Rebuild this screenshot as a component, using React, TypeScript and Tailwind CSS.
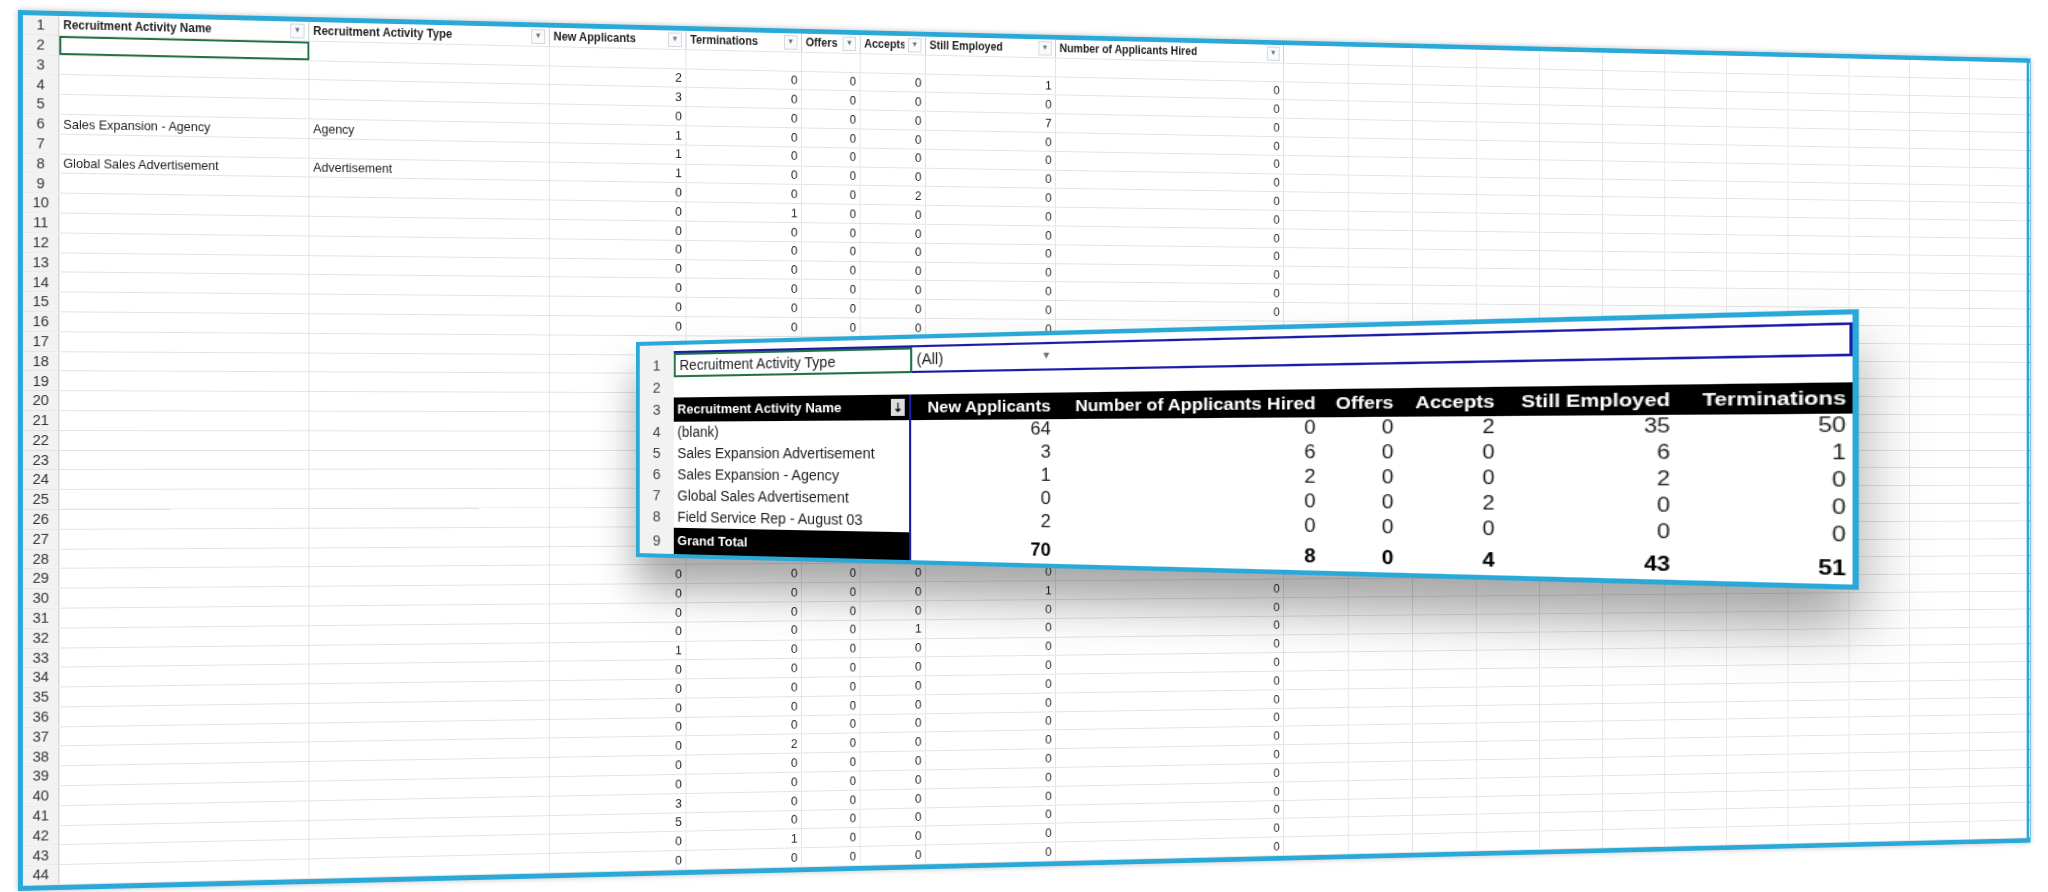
import React from 'react';

const font = { fontFamily: '"Liberation Sans", Arial, sans-serif' };

// column widths of the back sheet (flat, before perspective)
const cols = [258, 255, 148, 127, 65, 73, 147, 263];
const extra = Array.from({ length: 12 }, () => 76);

const na: Record<number, string> = { 3: '2', 4: '3', 5: '0', 6: '1', 7: '1', 8: '1', 33: '1', 41: '3', 42: '5' };
const term: Record<number, string> = { 10: '1', 38: '2', 43: '1' };
const acc: Record<number, string> = { 9: '2', 32: '1' };
const emp: Record<number, string> = { 3: '1', 5: '7', 30: '1' };
const hidden = (r: number) => r >= 17 && r <= 28;

function Filter() {
  return (
    <span className="ml-auto flex h-[15px] w-[15px] shrink-0 items-center justify-center border border-gray-300 bg-gray-50 text-[8px] text-gray-500">
      ▼
    </span>
  );
}

function Sheet() {
  const heads = [
    'Recruitment Activity Name',
    'Recruitment Activity Type',
    'New Applicants',
    'Terminations',
    'Offers',
    'Accepts',
    'Still Employed',
    'Number of Applicants Hired',
  ];
  const rows = Array.from({ length: 44 }, (_, i) => i + 1);
  return (
    <div
      className="absolute left-[18px] top-[10px] w-[2291px] border-[5px] border-[#2aa9d9] bg-white shadow-[0_0_6px_rgba(0,0,0,0.25)]"
      style={{ ...font, transform: 'perspective(3000px) rotateY(9.3deg)', transformOrigin: 'left center' }}
    >
      {rows.map((r) => (
        <div key={r} className="flex h-[19.8px] border-b border-[#e3e3e3] text-[13px] text-[#222]">
          <div className="flex w-[37px] shrink-0 items-center justify-center border-r border-[#c9c9c9] bg-[#f2f2f2] text-[15px] text-[#333]">
            {r}
          </div>
          {r === 1
            ? heads.map((h, i) => (
                <div
                  key={h}
                  style={{ width: cols[i] }}
                  className="flex shrink-0 items-center gap-1 border-r border-[#c9c9c9] px-1 text-[12px] font-bold whitespace-nowrap overflow-hidden"
                >
                  <span className="overflow-hidden">{h}</span>
                  <Filter />
                </div>
              ))
            : cols.map((w, i) => {
                let v = '';
                if (!hidden(r) && r > 2) {
                  if (i === 2) v = na[r] ?? '0';
                  if (i === 3) v = term[r] ?? '0';
                  if (i === 4) v = '0';
                  if (i === 5) v = acc[r] ?? '0';
                  if (i === 6) v = emp[r] ?? '0';
                  if (i === 7) v = '0';
                }
                if (i === 0 && r === 6) v = 'Sales Expansion - Agency';
                if (i === 1 && r === 6) v = 'Agency';
                if (i === 0 && r === 8) v = 'Global Sales Advertisement';
                if (i === 1 && r === 8) v = 'Advertisement';
                const sel = i === 0 && r === 2;
                return (
                  <div
                    key={i}
                    style={{ width: w }}
                    className={`flex shrink-0 items-center px-1 whitespace-nowrap ${i >= 2 ? 'justify-end' : ''} ${
                      sel ? 'border-2 border-[#217346]' : 'border-r border-[#e3e3e3]'
                    }`}
                  >
                    {v}
                  </div>
                );
              })}
          {extra.map((w, i) => (
            <div key={'e' + i} style={{ width: w }} className="shrink-0 border-r border-[#e3e3e3]" />
          ))}
        </div>
      ))}
    </div>
  );
}

// pivot columns (flat)
const pw = [131, 220, 60, 75, 123, 115];
const pivotRows = [
  ['(blank)', '64', '0', '0', '2', '35', '50'],
  ['Sales Expansion Advertisement', '3', '6', '0', '0', '6', '1'],
  ['Sales Expansion - Agency', '1', '2', '0', '0', '2', '0'],
  ['Global Sales Advertisement', '0', '0', '0', '2', '0', '0'],
  ['Field Service Rep - August 03', '2', '0', '0', '0', '0', '0'],
];

function Pivot() {
  const heads = ['New Applicants', 'Number of Applicants Hired', 'Offers', 'Accepts', 'Still Employed', 'Terminations'];
  return (
    <div
      className="absolute left-[636px] top-[342px] w-[1000px] border-[4px] border-[#2aa9d9] bg-white shadow-[0_30px_40px_rgba(0,0,0,0.35)]"
      style={{ ...font, transform: 'perspective(1500px) rotateY(-20.6deg)', transformOrigin: 'left center' }}
    >
      <div className="flex h-[8px]">
        <div className="w-[36px] bg-[#f2f2f2]" />
        <div className="flex-1 border-b-2 border-[#1c1ca8]" />
      </div>
      <div className="flex h-[24px] text-[14px] text-[#222]">
        <div className="flex w-[36px] items-center justify-center bg-[#f2f2f2] text-[15px] text-[#444]">1</div>
        <div className="flex w-[236px] items-center border-2 border-[#217346] px-1">Recruitment Activity Type</div>
        <div className="flex w-[130px] items-center border-b-2 border-[#1c1ca8] px-1">
          (All)
          <span className="ml-auto text-[9px] text-gray-500">▼</span>
        </div>
        <div className="flex-1 border-b-2 border-r-2 border-[#1c1ca8]" />
      </div>
      <div className="flex h-[20px]">
        <div className="flex w-[36px] items-center justify-center bg-[#f2f2f2] text-[15px] text-[#444]">2</div>
        <div className="flex-1" />
      </div>
      <div className="flex h-[24px] bg-black text-white font-bold">
        <div className="flex w-[36px] items-center justify-center bg-[#f2f2f2] text-[15px] font-normal text-[#444]">3</div>
        <div className="flex w-[236px] items-center border-r-2 border-[#1c1ca8] px-1 text-[13px]">
          Recruitment Activity Name
          <span className="ml-auto bg-[#ddd] px-[2px] text-[11px] text-black">⇣</span>
        </div>
        {heads.map((h, i) => (
          <div key={h} style={{ width: pw[i] }} className="flex items-center justify-end whitespace-nowrap px-1 text-[15px]">
            {h}
          </div>
        ))}
      </div>
      {pivotRows.map((row, ri) => (
        <div key={ri} className="flex h-[21px] text-[14px] text-[#222]">
          <div className="flex w-[36px] items-center justify-center bg-[#f2f2f2] text-[15px] text-[#444]">{ri + 4}</div>
          <div className="flex w-[236px] items-center whitespace-nowrap border-r-2 border-[#1c1ca8] px-1">{row[0]}</div>
          {row.slice(1).map((v, i) => (
            <div key={i} style={{ width: pw[i] }} className="flex items-end justify-end px-1 text-[16px]">
              {v}
            </div>
          ))}
        </div>
      ))}
      <div className="flex h-[26px] text-[15px] font-bold">
        <div className="flex w-[36px] items-center justify-center bg-[#f2f2f2] font-normal text-[#444]">9</div>
        <div className="flex w-[236px] items-center border-r-2 border-[#1c1ca8] bg-black px-1 text-[13px] text-white">Grand Total</div>
        {['70', '8', '0', '4', '43', '51'].map((v, i) => (
          <div key={i} style={{ width: pw[i] }} className="flex items-end justify-end px-1 text-[16px] text-black">
            {v}
          </div>
        ))}
      </div>
    </div>
  );
}

export default function App() {
  return (
    <div className="relative h-[892px] w-[2048px] overflow-hidden bg-white">
      <Sheet />
      <Pivot />
    </div>
  );
}
